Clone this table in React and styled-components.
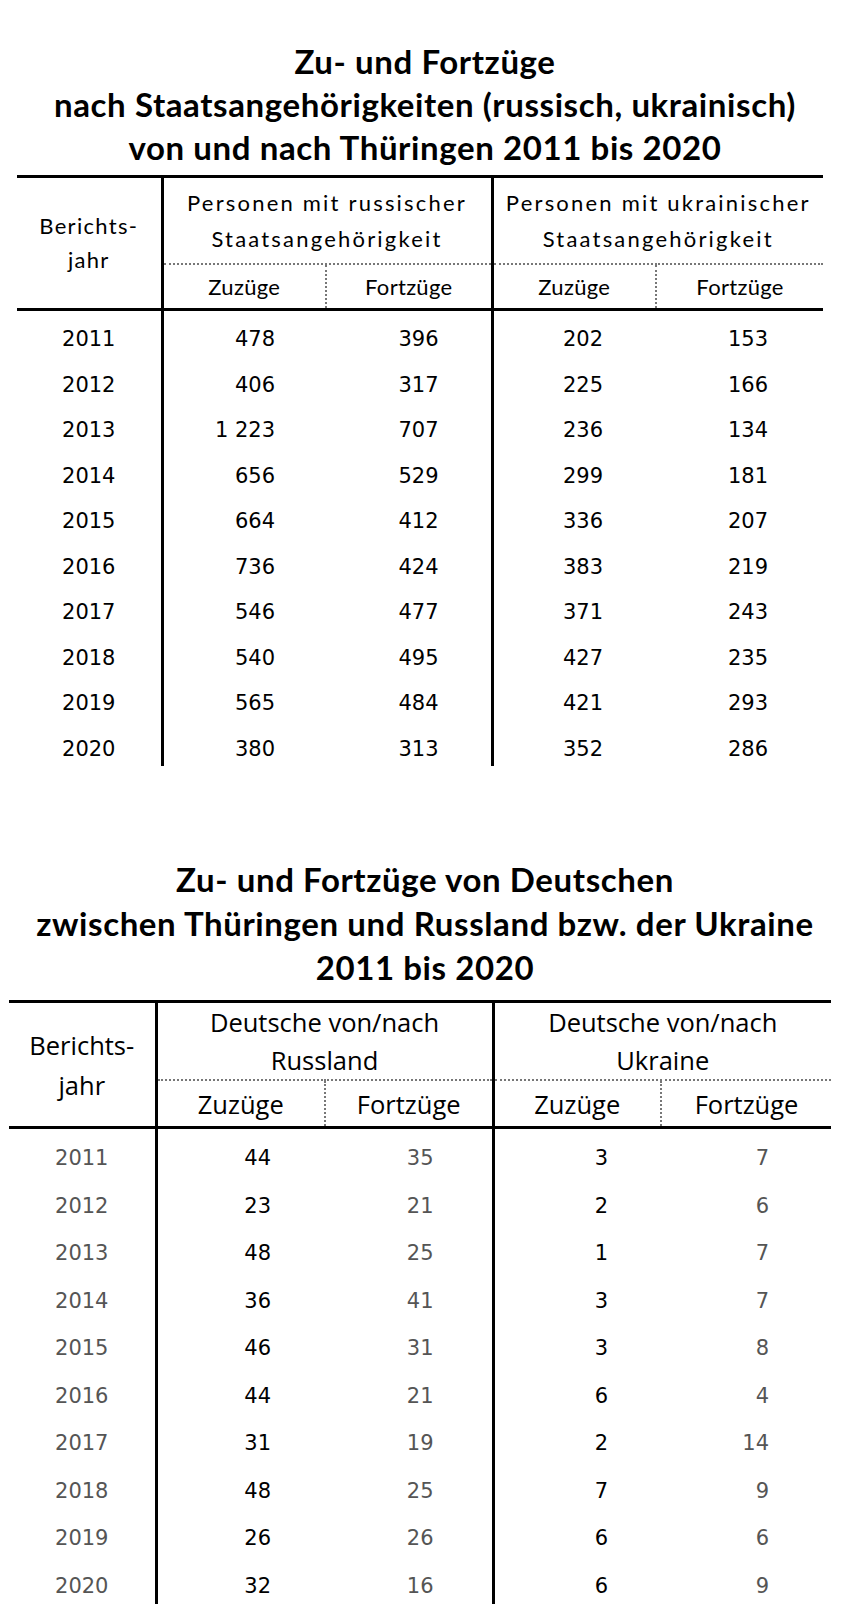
import React from 'react';
import styled, { createGlobalStyle } from 'styled-components';

const GlobalStyle = createGlobalStyle`
    html, body {
        margin: 0;
        padding: 0;
        background: #fff;
    }
`;

const russianRows = [
    ['2011', '478', '396', '202', '153'],
    ['2012', '406', '317', '225', '166'],
    ['2013', '1 223', '707', '236', '134'],
    ['2014', '656', '529', '299', '181'],
    ['2015', '664', '412', '336', '207'],
    ['2016', '736', '424', '383', '219'],
    ['2017', '546', '477', '371', '243'],
    ['2018', '540', '495', '427', '235'],
    ['2019', '565', '484', '421', '293'],
    ['2020', '380', '313', '352', '286'],
];

const germanRows = [
    ['2011', '44', '35', '3', '7'],
    ['2012', '23', '21', '2', '6'],
    ['2013', '48', '25', '1', '7'],
    ['2014', '36', '41', '3', '7'],
    ['2015', '46', '31', '3', '8'],
    ['2016', '44', '21', '6', '4'],
    ['2017', '31', '19', '2', '14'],
    ['2018', '48', '25', '7', '9'],
    ['2019', '26', '26', '6', '6'],
    ['2020', '32', '16', '6', '9'],
];

// per table: column widths, number paddings and header metrics
const tables = [
    {
        title: ['Zu- und Fortzüge', 'nach Staatsangehörigkeiten (russisch, ukrainisch)', 'von und nach Thüringen 2011 bis 2020'],
        groups: [['Personen mit russischer', 'Staatsangehörigkeit'], ['Personen mit ukrainischer', 'Staatsangehörigkeit']],
        cols: [145, 164, 166, 164, 167],
        pads: [51, 52, 53, 55],
        left: 17,
        titleTop: 40,
        titleLine: 43,
        titleGap: 6,
        head: { font: '"Lato", "Open Sans", sans-serif', size: 22, sub: 0.3, group: 2.2, year: 1.3 },
        groupHeight: 85,
        subHeight: 43,
        headLine: 36,
        yearLine: 34,
        rowHeight: 45.5,
        muted: false,
        rows: russianRows,
    },
    {
        title: ['Zu- und Fortzüge von Deutschen', 'zwischen Thüringen und Russland bzw. der Ukraine', '2011 bis 2020'],
        groups: [['Deutsche von/nach', 'Russland'], ['Deutsche von/nach', 'Ukraine']],
        cols: [147, 169, 168, 168, 170],
        pads: [54, 58, 53, 62],
        left: 9,
        titleTop: 91,
        titleLine: 44,
        titleGap: 11,
        head: { font: '"Open Sans", "Noto Sans", sans-serif', size: 25.5, sub: 0, group: 0, year: 0 },
        groupHeight: 74,
        subHeight: 45,
        headLine: 38,
        yearLine: 40,
        rowHeight: 47.5,
        muted: true,
        rows: germanRows,
    },
];

const Block = ({ t }) => (
    <Section>
        <Title $top={t.titleTop} $line={t.titleLine} $gap={t.titleGap}>
            {t.title.map(line => <div key={line}>{line}</div>)}
        </Title>
        <DataTable $left={t.left} $width={t.cols.reduce((a, b) => a + b, 0)}>
            <colgroup>
                {t.cols.map((w, i) => <col key={i} style={{ width: w }}/>)}
            </colgroup>
            <thead>
                <tr>
                    <YearHead rowSpan={2} $head={t.head} $spacing={t.head.year} $line={t.yearLine}>
                        Berichts-<br/>jahr
                    </YearHead>
                    {t.groups.map((g, i) => (
                        <GroupHead key={i}
                                   colSpan={2}
                                   $first={i === 0}
                                   $head={t.head}
                                   $spacing={t.head.group}
                                   $line={t.headLine}
                                   $height={t.groupHeight}>
                            {g[0]}<br/>{g[1]}
                        </GroupHead>
                    ))}
                </tr>
                <tr>
                    {[0, 1, 2, 3].map(i => (
                        <SubHead key={i}
                                 $head={t.head}
                                 $spacing={t.head.sub}
                                 $height={t.subHeight}
                                 $edge={i === 2 ? 'solid' : i % 2 ? 'dotted' : 'none'}>
                            {i % 2 ? 'Fortzüge' : 'Zuzüge'}
                        </SubHead>
                    ))}
                </tr>
            </thead>
            <tbody>
                {t.rows.map(r => (
                    <tr key={r[0]}>
                        <YearCell $height={t.rowHeight} $muted={t.muted}>{r[0]}</YearCell>
                        {r.slice(1).map((v, i) => (
                            <NumCell key={i}
                                     $height={t.rowHeight}
                                     $pad={t.pads[i]}
                                     $split={i === 2}
                                     $muted={t.muted && i % 2 === 1}>
                                {v}
                            </NumCell>
                        ))}
                    </tr>
                ))}
            </tbody>
        </DataTable>
    </Section>
);

export default function App() {
    return (
        <Page>
            <GlobalStyle/>
            {tables.map((t, i) => <Block key={i} t={t}/>)}
        </Page>
    );
}

const Page = styled.div`
    width: 850px;
    padding-bottom: 20px;
    color: #000;
`;

const Section = styled.section`
    display: flex;
    flex-direction: column;
`;

const Title = styled.h2`
    margin: ${p => p.$top}px 0 ${p => p.$gap}px;
    font-family: "Lato", "Open Sans", sans-serif;
    font-weight: 700;
    font-size: 33px;
    line-height: ${p => p.$line}px;
    text-align: center;
    letter-spacing: 0.6px;
`;

const DataTable = styled.table`
    margin-left: ${p => p.$left}px;
    width: ${p => p.$width}px;
    border-collapse: collapse;
    table-layout: fixed;
    border-top: 3px solid #000;
`;

const HeadCell = styled.th`
    font-family: ${p => p.$head.font};
    font-size: ${p => p.$head.size}px;
    letter-spacing: ${p => p.$spacing}px;
    font-weight: 400;
    padding: 0;
    text-align: center;
    vertical-align: middle;
    white-space: nowrap;
`;

const YearHead = styled(HeadCell)`
    line-height: ${p => p.$line}px;
    border-right: 3px solid #000;
    border-bottom: 3px solid #000;
`;

const GroupHead = styled(HeadCell)`
    height: ${p => p.$height}px;
    line-height: ${p => p.$line}px;
    border-bottom: 2px dotted #777;
    border-left: ${p => p.$first ? 'none' : '3px solid #000'};
`;

const SubHead = styled(HeadCell)`
    height: ${p => p.$height}px;
    line-height: 30px;
    border-bottom: 3px solid #000;
    border-left: ${p => p.$edge === 'solid' ? '3px solid #000' : p.$edge === 'dotted' ? '2px dotted #777' : 'none'};
`;

const BodyCell = styled.td`
    height: ${p => p.$height}px;
    box-sizing: border-box;
    padding: 11px 0 0;
    font-family: "DejaVu Sans", Verdana, sans-serif;
    font-size: 21px;
    line-height: ${p => p.$height - 11}px;
    color: ${p => p.$muted ? '#555' : '#000'};
    vertical-align: top;
`;

const YearCell = styled(BodyCell)`
    text-align: center;
    border-right: 3px solid #000;
`;

const NumCell = styled(BodyCell)`
    text-align: right;
    padding-right: ${p => p.$pad}px;
    border-left: ${p => p.$split ? '3px solid #000' : 'none'};
`;
